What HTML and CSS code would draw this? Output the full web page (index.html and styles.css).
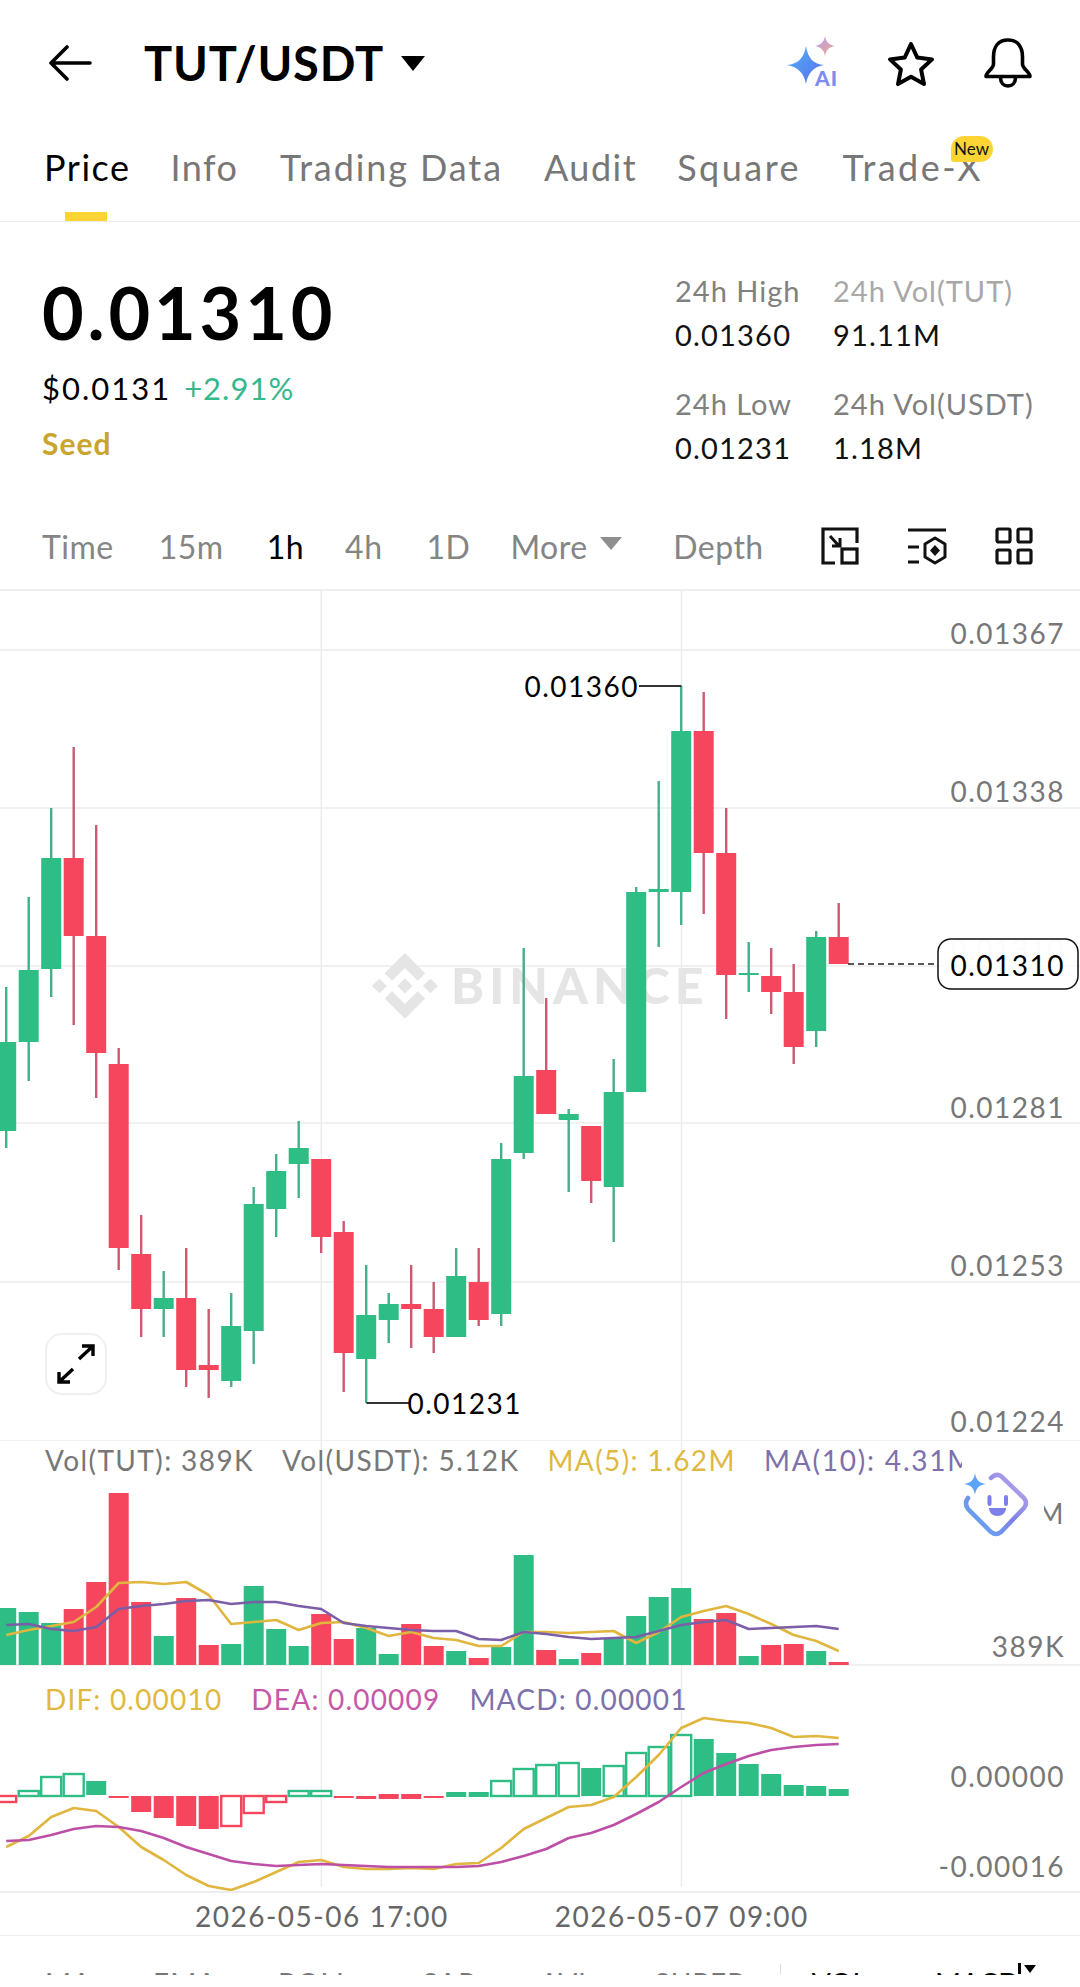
FILE: index.html
```html
<!DOCTYPE html>
<html lang="en">
<head>
  <meta charset="UTF-8">
  <meta name="viewport" content="width=device-width, initial-scale=1">
  <title>TUT/USDT</title>
  <link rel="stylesheet" href="styles.css">
</head>
<body>

  <header class="top-bar">
    <svg class="back-icon" width="44" height="36" viewBox="0 0 44 36">
      <path d="M42 18H3M19 2L3 18l16 16" fill="none" stroke="#000" stroke-width="3.6" stroke-linecap="round" stroke-linejoin="round"/>
    </svg>
    <h1 class="pair">TUT/USDT</h1>
    <span class="pair-caret"></span>
    <svg class="ai-icon" width="54" height="52" viewBox="0 0 54 52">
      <defs>
        <linearGradient id="aiBig" x1="0" y1="0" x2="1" y2="1">
          <stop offset="0" stop-color="#4fb4f5"/>
          <stop offset="1" stop-color="#5b6cf0"/>
        </linearGradient>
        <linearGradient id="aiSmall" x1="0" y1="0" x2="1" y2="1">
          <stop offset="0" stop-color="#b69cf0"/>
          <stop offset="1" stop-color="#f0a98c"/>
        </linearGradient>
      </defs>
      <path d="M20 10C22 22 27 28 38 29C27 31 22 37 20 48C18 37 12 31 1 29C12 28 18 22 20 10Z" fill="url(#aiBig)"/>
      <path d="M39 0C40 6 43 9 49 10C43 11 40 14 39 20C38 14 35 11 29 10C35 9 38 6 39 0Z" fill="url(#aiSmall)"/>
      <text class="ai-text" x="29" y="50">AI</text>
    </svg>
    <svg class="star-icon" width="48" height="46" viewBox="0 0 48 46">
      <path d="M24 3l6.3 13.6 14.7 1.8-10.9 10.1 2.9 14.6L24 35.8l-13 7.3 2.9-14.6L3 18.4l14.7-1.8z" fill="none" stroke="#000" stroke-width="4" stroke-linejoin="round"/>
    </svg>
    <svg class="bell-icon" width="48" height="50" viewBox="0 0 48 50">
      <path d="M24 2C14 2 9.500 9 9.500 19V26C9.500 31 2 34 2 38.500H46C46 34 38.500 31 38.500 26V19C38.500 9 34 2 24 2Z" fill="none" stroke="#000" stroke-width="3.600" stroke-linejoin="round"/>
      <path d="M16.500 39.500C16.500 45 20 48 24 48S31.500 45 31.500 39.500" fill="none" stroke="#000" stroke-width="3.600"/>
    </svg>
  </header>

  <nav class="tabs">
    <a class="tab active">Price</a>
    <a class="tab tab-info">Info</a>
    <a class="tab tab-data">Trading Data</a>
    <a class="tab tab-audit">Audit</a>
    <a class="tab tab-square">Square</a>
    <a class="tab tab-trade">Trade-X<span class="badge">New</span></a>
  </nav>

  <section class="ticker">
    <div class="ticker-main">
      <div class="last-price">0.01310</div>
      <div class="fiat">$0.0131 <span class="change">+2.91%</span></div>
      <div class="seed">Seed</div>
    </div>
    <div class="stats-col">
      <div class="stat"><span class="stat-label">24h High</span><span class="stat-value">0.01360</span></div>
      <div class="stat"><span class="stat-label">24h Low</span><span class="stat-value">0.01231</span></div>
    </div>
    <div class="stats-col">
      <div class="stat"><span class="stat-label light">24h Vol(TUT)</span><span class="stat-value">91.11M</span></div>
      <div class="stat"><span class="stat-label">24h Vol(USDT)</span><span class="stat-value">1.18M</span></div>
    </div>
  </section>

  <div class="intervals">
    <span class="interval i-time">Time</span>
    <span class="interval i-15m">15m</span>
    <span class="interval i-1h active">1h</span>
    <span class="interval i-4h">4h</span>
    <span class="interval i-1d">1D</span>
    <span class="interval i-more">More</span><span class="more-caret"></span>
    <span class="interval i-depth">Depth</span>
    <svg class="tool-icon first" width="38" height="38" viewBox="0 0 38 38">
      <path d="M14 36H2V2H36V16" fill="none" stroke="#111" stroke-width="3.200"/>
      <rect x="21" y="22" width="15" height="14" fill="none" stroke="#111" stroke-width="3.200"/>
      <path d="M9 9l9 10M19 11v8h-8" fill="none" stroke="#111" stroke-width="3"/>
    </svg>
    <svg class="tool-icon" width="40" height="38" viewBox="0 0 40 38">
      <path d="M1 3H39M1 20H12M1 35H12" fill="none" stroke="#111" stroke-width="3.200"/>
      <path d="M28 11L38 17V30L28 36L18 30V17Z" fill="none" stroke="#111" stroke-width="3" stroke-linejoin="round"/>
      <path d="M28 18L33 23.500L28 29L23 23.500Z" fill="#111"/>
    </svg>
    <svg class="tool-icon" width="38" height="38" viewBox="0 0 38 38">
      <g fill="none" stroke="#111" stroke-width="3.200">
        <rect x="2" y="2" width="13" height="13" rx="1.500"/>
        <rect x="23" y="2" width="13" height="13" rx="1.500"/>
        <rect x="2" y="23" width="13" height="13" rx="1.500"/>
        <rect x="23" y="23" width="13" height="13" rx="1.500"/>
      </g>
    </svg>
  </div>

  <section class="chart">
    <div class="pane pane-kline">
      <svg class="pane-svg" id="kline" width="1080" height="849" viewBox="0 591 1080 849">
        <g id="kline-grid"></g>
        <g class="watermark">
          <path transform="translate(372 953) scale(.52)" d="M38.730 53.200l24.590-24.580 24.600 24.600 14.300-14.310L63.320 0l-38.900 38.900zM0 63.310l14.300-14.310 14.310 14.310-14.310 14.300zM38.730 73.410L63.320 98l24.600-24.600 14.310 14.290-38.900 38.910-38.910-38.880v-.030zM98 63.310l14.300-14.310 14.310 14.300-14.310 14.320zM77.830 63.300L63.320 48.780 52.590 59.510l-1.240 1.230-2.540 2.540 14.510 14.500 14.510-14.470z"/>
          <text class="watermark-text" x="451" y="1004">BINANCE</text>
        </g>
        <g id="kline-candles"></g>
        <text class="axis" x="1065" y="644">0.01367</text>
        <text class="axis" x="1065" y="802">0.01338</text>
        <text class="axis ghost" x="1065" y="960">0.01310</text>
        <text class="axis" x="1065" y="1118">0.01281</text>
        <text class="axis" x="1065" y="1276">0.01253</text>
        <text class="axis" x="1065" y="1432">0.01224</text>

        <path class="marker-line" d="M639 686H681.500M366.400 1403H409"/>
        <text class="marker" x="639" y="697">0.01360</text>
        <text class="marker" x="522" y="1414">0.01231</text>

        <path class="last-line" d="M848 964H934"/>
        <rect class="last-tag" x="938" y="939" width="140" height="50" rx="13"/>
        <text class="axis dark" x="1065" y="976">0.01310</text>
      </svg>
      <button class="expand-btn">
        <svg width="40" height="40" viewBox="0 0 40 40">
          <path d="M23 15L37 2M26 2H37V12M17 25L3 38M14 38H3V28" fill="none" stroke="#000" stroke-width="3.400"/>
        </svg>
      </button>
    </div>

    <div class="pane pane-vol">
      <svg class="pane-svg" id="vol" width="1080" height="226" viewBox="0 1440 1080 226">
        <text class="axis" x="1065" y="1524">M</text>
        <text class="axis" x="1065" y="1657">389K</text>
      </svg>
      <div class="legend legend-vol">
        <span class="grey">Vol(TUT): 389K</span>
        <span class="grey">Vol(USDT): 5.12K</span>
        <span class="yellow">MA(5): 1.62M</span>
        <span class="purple">MA(10): 4.31M</span>
      </div>
      <svg class="face-icon" width="81" height="66" viewBox="-1 -1 81 66">
        <defs>
          <linearGradient id="faceLine" gradientUnits="userSpaceOnUse" x1="0" y1="64" x2="64" y2="0">
            <stop offset="0" stop-color="#59b5f4"/>
            <stop offset=".5" stop-color="#7d80e8"/>
            <stop offset="1" stop-color="#c9b0ea"/>
          </linearGradient>
        </defs>
        <path d="M27 6Q32 1 37 4L60 26Q64 31 60 36L37 60Q32 64 27 60L4 37Q0 31 4 26" fill="none" stroke="url(#faceLine)" stroke-width="4.500" stroke-linecap="round"/>
        <path d="M11 1C12 8 15 11 22 12C15 13 12 16 11 23C10 16 7 13 0 12C7 11 10 8 11 1Z" fill="#5aa5f5"/>
        <rect x="23.500" y="23" width="4" height="11" rx="2" fill="#7d80e8"/>
        <rect x="40" y="23" width="4" height="11" rx="2" fill="#7d80e8"/>
        <path d="M25 36H42C42 41 38 44 33.500 44S25 41 25 36Z" fill="#7d80e8"/>
      </svg>
    </div>

    <div class="pane pane-macd">
      <svg class="pane-svg" id="macd" width="1080" height="225" viewBox="0 1666 1080 225">
        <text class="axis" x="1065" y="1787">0.00000</text>
        <text class="axis" x="1065" y="1877">-0.00016</text>
      </svg>
      <div class="legend legend-macd">
        <span class="yellow">DIF: 0.00010</span>
        <span class="pink">DEA: 0.00009</span>
        <span class="purple">MACD: 0.00001</span>
      </div>
    </div>

    <div class="time-axis">
      <span class="time t-first">2026-05-06 17:00</span>
      <span class="time t-second">2026-05-07 09:00</span>
    </div>
  </section>

  <div class="indicators">
    <span class="ind ind-ma">MA</span>
    <span class="ind ind-ema">EMA</span>
    <span class="ind ind-boll">BOLL</span>
    <span class="ind ind-sar">SAR</span>
    <span class="ind ind-avl">AVL</span>
    <span class="ind ind-super">SUPER</span>
    <span class="ind-divider"></span>
    <span class="ind on ind-vol">VOL</span>
    <span class="ind on ind-macd">MACD</span>
    <span class="ind-bar"></span>
    <span class="ind-caret"></span>
  </div>

  <script src="chart.js"></script>
</body>
</html>
```

FILE: styles.css
```css
* {
  box-sizing: border-box;
}

html, body {
  margin: 0;
  padding: 0;
  background-color: #ffffff;
}

body {
  width: 1080px;
  height: 1987px;
  overflow: hidden;
  font-family: Lato, 'Open Sans', sans-serif;
  color: #000;
}

/* top bar */
.top-bar {
  height: 126px;
  display: flex;
  align-items: center;
  padding-left: 48px;
}

.pair {
  margin: 0 0 0 52px;
  font-size: 47px;
  font-weight: 700;
  letter-spacing: .8px;
}

.pair-caret {
  margin-left: 17px;
  width: 0;
  height: 0;
  border-left: 12px solid transparent;
  border-right: 12px solid transparent;
  border-top: 15px solid #000;
}

.ai-icon {
  margin-left: 361px;
  margin-top: -2px;
}

.ai-text {
  font-size: 21px;
  font-weight: 900;
  letter-spacing: 1px;
  fill: #7f8cf0;
}

.star-icon {
  margin-left: 47px;
  margin-top: 1px;
}

.bell-icon {
  margin-left: 49px;
}

/* tabs */
.tabs {
  height: 96px;
  display: flex;
  padding: 19px 0 0 44px;
  border-bottom: 1px solid #ececec;
}

.tab {
  position: relative;
  font-size: 36px;
  line-height: 44px;
  letter-spacing: 1.500px;
  color: #777;
}

.tab.active {
  color: #000;
}

.tab.active::after {
  content: "";
  position: absolute;
  left: 21px;
  top: 67px;
  width: 42px;
  height: 9px;
  background-color: #fcd535;
}

.tab-info { margin-left: 40px; }
.tab-data { margin-left: 41.500px; letter-spacing: 1.900px; }
.tab-audit { margin-left: 41px; }
.tab-square { margin-left: 40px; letter-spacing: 2.500px; }
.tab-trade { margin-left: 41.500px; letter-spacing: 2.500px; }

.badge {
  position: absolute;
  left: 108px;
  top: -9px;
  width: 42px;
  height: 26px;
  border-radius: 13px 13px 13px 3px;
  background-color: #fcd535;
  color: #111;
  font-size: 17px;
  line-height: 26px;
  letter-spacing: 0;
  text-align: center;
}

/* price block */
.ticker {
  height: 281px;
  display: flex;
  padding-left: 42px;
}

.ticker-main {
  width: 633px;
  padding-top: 50px;
}

.last-price {
  font-size: 72px;
  line-height: 80px;
  font-weight: 700;
  letter-spacing: 3.800px;
}

.fiat {
  margin-top: 14px;
  font-size: 31px;
  line-height: 44px;
  letter-spacing: 2px;
}

.change {
  color: #35b88c;
  margin-left: 3px;
  letter-spacing: 1px;
}

.seed {
  margin-top: 13px;
  font-size: 30px;
  line-height: 40px;
  font-weight: 700;
  letter-spacing: 1px;
  color: #c9a52d;
}

.stats-col {
  padding-top: 47px;
  width: 158px;
}

.stats-col + .stats-col {
  width: 245px;
}

.stat {
  margin-bottom: 25px;
}

.stat-label, .stat-value {
  display: block;
  font-size: 29px;
  line-height: 44px;
  white-space: nowrap;
}

.stat-label {
  color: #808080;
  letter-spacing: 1px;
}

.stat-label.light {
  color: #a8a8a8;
}

.stat-value {
  color: #111;
  letter-spacing: 1.200px;
}

/* interval row */
.intervals {
  height: 88px;
  position: relative;
  display: flex;
  align-items: center;
  border-bottom: 2px solid #eeeeee;
}

.interval {
  font-size: 32px;
  letter-spacing: .5px;
  color: #858585;
}

.interval.active {
  color: #000;
}

.i-time { margin-left: 42px; }
.i-15m { margin-left: 45px; }
.i-1h { margin-left: 43px; }
.i-4h { margin-left: 41px; }
.i-1d { margin-left: 44px; }
.i-more { margin-left: 40px; }
.i-depth { margin-left: 51.500px; }

.more-caret {
  margin-left: 12px;
  margin-top: -5px;
  width: 0;
  height: 0;
  border-left: 11px solid transparent;
  border-right: 11px solid transparent;
  border-top: 13px solid #8f8f8f;
}

.tool-icon {
  margin-left: 48px;
}

.tool-icon.first {
  margin-left: 57px;
}

/* chart */
.pane {
  position: relative;
}

.pane-kline { height: 849px; }
.pane-vol { height: 226px; }
.pane-macd { height: 225px; }

.pane-svg {
  position: absolute;
  left: 0;
  top: 0;
}

.axis {
  font-size: 28px;
  letter-spacing: 1.500px;
  fill: #777;
  text-anchor: end;
}

.axis.dark {
  fill: #000;
}

.axis.ghost {
  fill: #ececec;
}

.marker {
  font-size: 28px;
  letter-spacing: 1.500px;
  fill: #000;
  text-anchor: end;
}

.marker-line {
  fill: none;
  stroke: #333;
  stroke-width: 1.800;
}

.last-line {
  fill: none;
  stroke: #222;
  stroke-width: 1.500;
  stroke-dasharray: 6 4;
}

.last-tag {
  fill: rgba(255, 255, 255, .8);
  stroke: #111;
  stroke-width: 1.500;
}

.watermark {
  fill: #e5e5e5;
}

.watermark-text {
  font-size: 50px;
  font-weight: 900;
  letter-spacing: 5px;
}

.expand-btn {
  position: absolute;
  left: 45px;
  top: 742px;
  width: 62px;
  height: 62px;
  padding: 0;
  display: flex;
  align-items: center;
  justify-content: center;
  background-color: #ffffff;
  border: 2px solid #f0f0f0;
  border-radius: 17px;
}

.legend {
  position: relative;
  width: 962px;
  padding: 3px 0 0 45px;
  display: flex;
  gap: 28px;
  overflow: hidden;
  white-space: nowrap;
  font-size: 28px;
  line-height: 34px;
  letter-spacing: 1.200px;
}

.legend-vol {
  letter-spacing: 1.400px;
}

.legend-vol .purple {
  letter-spacing: 1.800px;
}

.legend-macd {
  padding-top: 16px;
  gap: 29px;
}

.grey { color: #777; }
.yellow { color: #dfb93f; }
.purple { color: #7d70ab; }
.pink { color: #c559a8; }

.face-icon {
  position: absolute;
  left: 963px;
  top: 31px;
  background-color: #ffffff;
}

.time-axis {
  height: 45px;
  position: relative;
  padding-top: 2px;
  border-top: 2px solid #eeeeee;
  border-bottom: 1px solid #ececec;
  display: flex;
}

.time {
  font-size: 28px;
  line-height: 42px;
  letter-spacing: 1.500px;
  color: #666;
  white-space: nowrap;
}

.t-first { margin-left: 195px; }
.t-second { margin-left: 106px; }

/* indicators row, only the top of the letters is on screen */
.indicators {
  height: 39px;
  display: flex;
  overflow: hidden;
}

.ind {
  font-size: 28px;
  line-height: 34px;
  padding-top: 30px;
  color: #777;
  letter-spacing: 1px;
}

.ind.on {
  color: #000;
  letter-spacing: 0;
}

.ind-ma { margin-left: 45px; }
.ind-ema { margin-left: 61px; }
.ind-boll { margin-left: 61px; }
.ind-sar { margin-left: 71px; }
.ind-avl { margin-left: 63px; }
.ind-super { margin-left: 61px; }
.ind-vol { margin-left: 30.500px; }
.ind-macd { margin-left: 68px; }

.ind-divider {
  margin: 28px 0 0 34.500px;
  width: 1px;
  height: 10px;
  background-color: #dddddd;
}

.ind-bar {
  margin: 27px 0 0 -1px;
  width: 3px;
  height: 11px;
  background-color: #000;
}

.ind-caret {
  margin: 29px 0 0 3px;
  width: 0;
  height: 0;
  border-left: 6px solid transparent;
  border-right: 6px solid transparent;
  border-top: 8px solid #000;
}
```

FILE: chart.js
```js
const GREEN = '#2ebd85';
const RED = '#f6465d';
const WICK_GREEN = '#45ae8b';
const WICK_RED = '#cc5a72';
const YELLOW = '#e0b63e';
const PURPLE = '#7a5ea8';
const PINK = '#bd4fa6';
const GRID = '#f1f1f1';

const STEP = 22.5;
const BODY = 20;

// body top, body bottom, wick top, wick bottom, up
const candles = [
  [1042, 1131, 987, 1148, 1], [970, 1042, 897, 1081, 1], [858, 969, 808, 997, 1],
  [858, 936, 747, 1025, 0], [936, 1053, 825, 1098, 0], [1064, 1248, 1048, 1270, 0],
  [1254, 1309, 1215, 1337, 0], [1298, 1309, 1271, 1337, 1], [1298, 1370, 1248, 1387, 0],
  [1365, 1370, 1309, 1398, 0], [1326, 1381, 1293, 1387, 1], [1204, 1331, 1187, 1364, 1],
  [1171, 1209, 1154, 1237, 1], [1148, 1164, 1121, 1198, 1], [1159, 1237, 1159, 1253, 0],
  [1232, 1353, 1221, 1392, 0], [1315, 1359, 1265, 1403, 1], [1304, 1320, 1293, 1343, 1],
  [1304, 1309, 1265, 1348, 0], [1309, 1337, 1282, 1353, 0], [1276, 1337, 1248, 1337, 1],
  [1282, 1320, 1248, 1326, 0], [1159, 1314, 1143, 1326, 1], [1076, 1153, 948, 1159, 1],
  [1070, 1114, 998, 1114, 0], [1114, 1120, 1109, 1192, 1], [1126, 1181, 1126, 1203, 0],
  [1092, 1187, 1059, 1242, 1], [892, 1092, 887, 1092, 1], [889, 892, 781, 947, 1],
  [731, 892, 686, 925, 1], [731, 853, 692, 914, 0], [853, 975, 808, 1019, 0],
  [973, 975, 942, 992, 1], [976, 992, 948, 1014, 0], [992, 1047, 964, 1064, 0],
  [937, 1031, 931, 1047, 1], [937, 964, 903, 964, 0]
];

const volTops = [
  1608, 1612, 1623, 1609, 1582, 1493, 1602, 1636, 1598, 1645, 1644, 1586, 1629,
  1646, 1614, 1639, 1628, 1654, 1624, 1646, 1651, 1658, 1647, 1555, 1650, 1659,
  1653, 1639, 1616, 1597, 1588, 1619, 1613, 1656, 1645, 1644, 1651, 1662
];

const ma5 = [
  1635, 1630, 1626, 1622, 1607, 1583, 1582, 1584, 1582, 1595, 1624, 1622, 1620,
  1630, 1623, 1622, 1628, 1636, 1632, 1638, 1640, 1646, 1646, 1632, 1632, 1633,
  1632, 1631, 1643, 1632, 1617, 1611, 1606, 1614, 1624, 1635, 1641, 1651
];

const ma10 = [
  1625, 1624, 1629, 1631, 1627, 1609, 1606, 1604, 1601, 1600, 1604, 1602, 1602,
  1606, 1609, 1623, 1626, 1628, 1630, 1631, 1631, 1639, 1640, 1632, 1634, 1637,
  1639, 1638, 1637, 1631, 1625, 1622, 1620, 1629, 1628, 1627, 1626, 1629
];

// top, bottom, hollow
const macdBars = [
  [1796, 1802, 1], [1791, 1796, 1], [1777, 1796, 1], [1774, 1796, 1], [1781, 1795, 0],
  [1796, 1798, 0], [1796, 1812, 0], [1796, 1818, 0], [1796, 1826, 0], [1796, 1829, 0],
  [1796, 1826, 1], [1796, 1813, 1], [1796, 1802, 1], [1791, 1796, 1], [1791, 1796, 1],
  [1796, 1798, 0], [1796, 1799, 0], [1794, 1799, 0], [1794, 1799, 0], [1796, 1798, 0],
  [1792, 1797, 0], [1792, 1797, 0], [1781, 1796, 1], [1769, 1796, 1], [1765, 1796, 1],
  [1763, 1796, 1], [1768, 1796, 0], [1766, 1796, 1], [1753, 1796, 1], [1747, 1796, 1],
  [1735, 1796, 1], [1739, 1796, 0], [1753, 1796, 0], [1764, 1796, 0], [1774, 1796, 0],
  [1785, 1796, 0], [1786, 1796, 0], [1789, 1796, 0]
];

const dif = [
  1847, 1836, 1817, 1808, 1811, 1827, 1847, 1860, 1875, 1886, 1890, 1882, 1872,
  1862, 1860, 1867, 1869, 1869, 1868, 1869, 1864, 1863, 1848, 1829, 1818, 1807,
  1805, 1797, 1777, 1755, 1728, 1718, 1721, 1723, 1728, 1737, 1736, 1738
];

const dea = [
  1841, 1840, 1835, 1829, 1826, 1827, 1831, 1838, 1847, 1854, 1861, 1864, 1866,
  1865, 1864, 1865, 1866, 1867, 1867, 1867, 1867, 1866, 1862, 1856, 1849, 1838,
  1833, 1825, 1814, 1802, 1787, 1773, 1764, 1756, 1750, 1747, 1745, 1744
];

const NS = 'http://www.w3.org/2000/svg';

function el(parent, name, attrs) {
  const node = document.createElementNS(NS, name);
  for (const key in attrs) {
    node.setAttribute(key, attrs[key]);
  }
  parent.appendChild(node);
  return node;
}

function cx(i) {
  return 6.2 + STEP * i;
}

function hLine(parent, y, width) {
  el(parent, 'line', { x1: 0, x2: 1080, y1: y, y2: y, stroke: GRID, 'stroke-width': width || 2 });
}

function vLines(parent, y1, y2) {
  [321.3, 681.5].forEach(x => {
    el(parent, 'line', { x1: x, x2: x, y1: y1, y2: y2, stroke: '#ececec', 'stroke-width': 1.5 });
  });
}

function line(parent, values, color) {
  const pts = values.map((y, i) => cx(i) + ',' + y).join(' ');
  el(parent, 'polyline', {
    points: pts, fill: 'none', stroke: color, 'stroke-width': 2.6, 'stroke-linejoin': 'round'
  });
}

// kline
const kGrid = document.getElementById('kline-grid');
[650, 808, 966, 1123, 1282].forEach(y => hLine(kGrid, y));
vLines(kGrid, 591, 1440);

const kCandles = document.getElementById('kline-candles');
candles.forEach((c, i) => {
  const x = cx(i);
  el(kCandles, 'rect', { x: x - 1.2, y: c[2], width: 2.4, height: c[3] - c[2], fill: c[4] ? WICK_GREEN : WICK_RED });
  el(kCandles, 'rect', { x: x - BODY / 2, y: c[0], width: BODY, height: c[1] - c[0], fill: c[4] ? GREEN : RED });
});

// volume
const vol = document.getElementById('vol');
const volBack = el(vol, 'g', {});
vol.insertBefore(volBack, vol.firstChild);
hLine(volBack, 1440);
hLine(volBack, 1665);
vLines(volBack, 1440, 1666);
volTops.forEach((top, i) => {
  el(volBack, 'rect', {
    x: cx(i) - BODY / 2, y: top, width: BODY, height: 1665 - top, fill: candles[i][4] ? GREEN : RED
  });
});
line(volBack, ma5, YELLOW);
line(volBack, ma10, PURPLE);

// macd
const macd = document.getElementById('macd');
const macdBack = el(macd, 'g', {});
macd.insertBefore(macdBack, macd.firstChild);
vLines(macdBack, 1666, 1887);
macdBars.forEach((b, i) => {
  const up = i < 5 ? i !== 0 : (i < 13 ? false : (i < 20 ? i < 15 : true));
  const color = up ? GREEN : RED;
  if (b[2]) {
    el(macdBack, 'rect', {
      x: cx(i) - BODY / 2, y: b[0], width: BODY, height: b[1] - b[0],
      fill: '#fff', stroke: color, 'stroke-width': 2.4
    });
  } else {
    el(macdBack, 'rect', { x: cx(i) - BODY / 2, y: b[0], width: BODY, height: b[1] - b[0], fill: color });
  }
});
line(macdBack, dif, YELLOW);
line(macdBack, dea, PINK);
```
